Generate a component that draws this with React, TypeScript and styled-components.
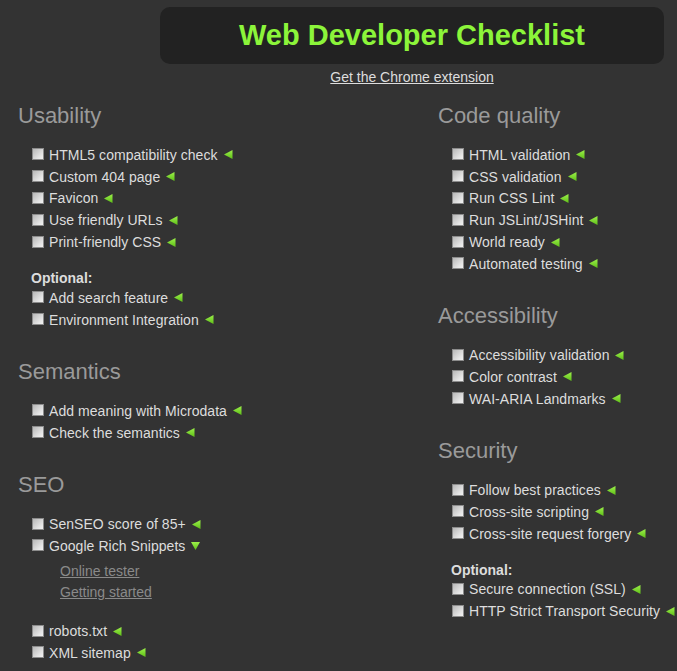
import styled, { createGlobalStyle } from 'styled-components';

const GlobalStyle = createGlobalStyle`
  body {
    margin: 0;
    background-color: #333333;
    font-family: "Liberation Sans", Arial, sans-serif;
    color: #dddddd;
  }
`;

const Page = styled.div`
  padding-top: 7px;
`;

const TitleBox = styled.header`
  margin-left: 160px;
  width: 504px;
  height: 57px;
  background-color: #222222;
  border-radius: 10px;
  display: flex;
  align-items: center;
  justify-content: center;
`;

const Title = styled.h1`
  margin: 0;
  font-size: 29px;
  font-weight: bold;
  color: #8cf53a;
`;

const ExtensionLine = styled.div`
  margin: 4px 0 0 160px;
  width: 504px;
  text-align: center;
  line-height: 18px;
  font-size: 14px;
`;

const ExtensionLink = styled.a`
  color: #dddddd;
  text-decoration: underline;
`;

const Columns = styled.div`
  display: grid;
  grid-template-columns: 420px 1fr;
  margin-top: 17px;
  padding-left: 18px;
`;

const Column = styled.div`
  display: flex;
  flex-direction: column;
  gap: 28.5px;
`;

const Section = styled.section``;

const Heading = styled.h2`
  margin: 0 0 15px;
  font-size: 22px;
  line-height: 26px;
  font-weight: normal;
  color: #9a9a9a;
`;

const List = styled.ul`
  list-style: none;
  margin: 0;
  padding: 0 0 0 14px;
`;

const Item = styled.li`
  display: flex;
  align-items: center;
  height: 21.8px;
  font-size: 14px;
  letter-spacing: 0.05px;
  white-space: nowrap;
`;

const Box = styled.span`
  box-sizing: border-box;
  width: 12px;
  height: 12px;
  margin: -1px 5px 0 0;
  border: 1px solid #8c8c8c;
  background: linear-gradient(135deg, #b8b8b8 0%, #e4e4e4 70%, #f2f2f2 100%);
  flex-shrink: 0;
`;

const Arrow = styled.svg`
  margin-left: 6px;
  flex-shrink: 0;
`;

const Optional = styled.div`
  margin-top: 16px;
  line-height: 18px;
  font-size: 14px;
  font-weight: bold;
  color: #dddddd;
  padding-left: 13px;
`;

const SubLinks = styled.div`
  padding: 4px 0 17.5px 42px;
  display: flex;
  flex-direction: column;
`;

const SubLink = styled.a`
  font-size: 14px;
  line-height: 21px;
  color: #8a8a8a;
  text-decoration: underline;
`;

function Pointer({ down }: { down?: boolean }) {
  return (
    <Arrow width="9" height="9" viewBox="0 0 9 9">
      <defs>
        <linearGradient id="grn" x1="0" y1="0" x2="0" y2="1">
          <stop offset="0" stopColor="#9cf04a" />
          <stop offset="1" stopColor="#5fbf18" />
        </linearGradient>
      </defs>
      {down ? (
        <polygon points="0,1 9,1 4.5,9" fill="url(#grn)" />
      ) : (
        <polygon points="8.5,0 8.5,9 0,4.5" fill="url(#grn)" />
      )}
    </Arrow>
  );
}

function Check({ label, down }: { label: string; down?: boolean }) {
  return (
    <Item>
      <Box />
      {label}
      <Pointer down={down} />
    </Item>
  );
}

function Checks({ items }: { items: string[] }) {
  return (
    <List>
      {items.map((t) => (
        <Check key={t} label={t} />
      ))}
    </List>
  );
}

export default function App() {
  return (
    <Page>
      <GlobalStyle />
      <TitleBox>
        <Title>Web Developer Checklist</Title>
      </TitleBox>
      <ExtensionLine>
        <ExtensionLink href="#">Get the Chrome extension</ExtensionLink>
      </ExtensionLine>
      <Columns>
        <Column>
          <Section>
            <Heading>Usability</Heading>
            <Checks
              items={[
                'HTML5 compatibility check',
                'Custom 404 page',
                'Favicon',
                'Use friendly URLs',
                'Print-friendly CSS',
              ]}
            />
            <Optional>Optional:</Optional>
            <Checks items={['Add search feature', 'Environment Integration']} />
          </Section>
          <Section>
            <Heading>Semantics</Heading>
            <Checks items={['Add meaning with Microdata', 'Check the semantics']} />
          </Section>
          <Section>
            <Heading>SEO</Heading>
            <List>
              <Check label="SenSEO score of 85+" />
              <Check label="Google Rich Snippets" down />
            </List>
            <SubLinks>
              <SubLink href="#">Online tester</SubLink>
              <SubLink href="#">Getting started</SubLink>
            </SubLinks>
            <Checks items={['robots.txt', 'XML sitemap']} />
          </Section>
        </Column>
        <Column>
          <Section>
            <Heading>Code quality</Heading>
            <Checks
              items={[
                'HTML validation',
                'CSS validation',
                'Run CSS Lint',
                'Run JSLint/JSHint',
                'World ready',
                'Automated testing',
              ]}
            />
          </Section>
          <Section>
            <Heading>Accessibility</Heading>
            <Checks items={['Accessibility validation', 'Color contrast', 'WAI-ARIA Landmarks']} />
          </Section>
          <Section>
            <Heading>Security</Heading>
            <Checks
              items={['Follow best practices', 'Cross-site scripting', 'Cross-site request forgery']}
            />
            <Optional>Optional:</Optional>
            <Checks items={['Secure connection (SSL)', 'HTTP Strict Transport Security']} />
          </Section>
        </Column>
      </Columns>
    </Page>
  );
}
